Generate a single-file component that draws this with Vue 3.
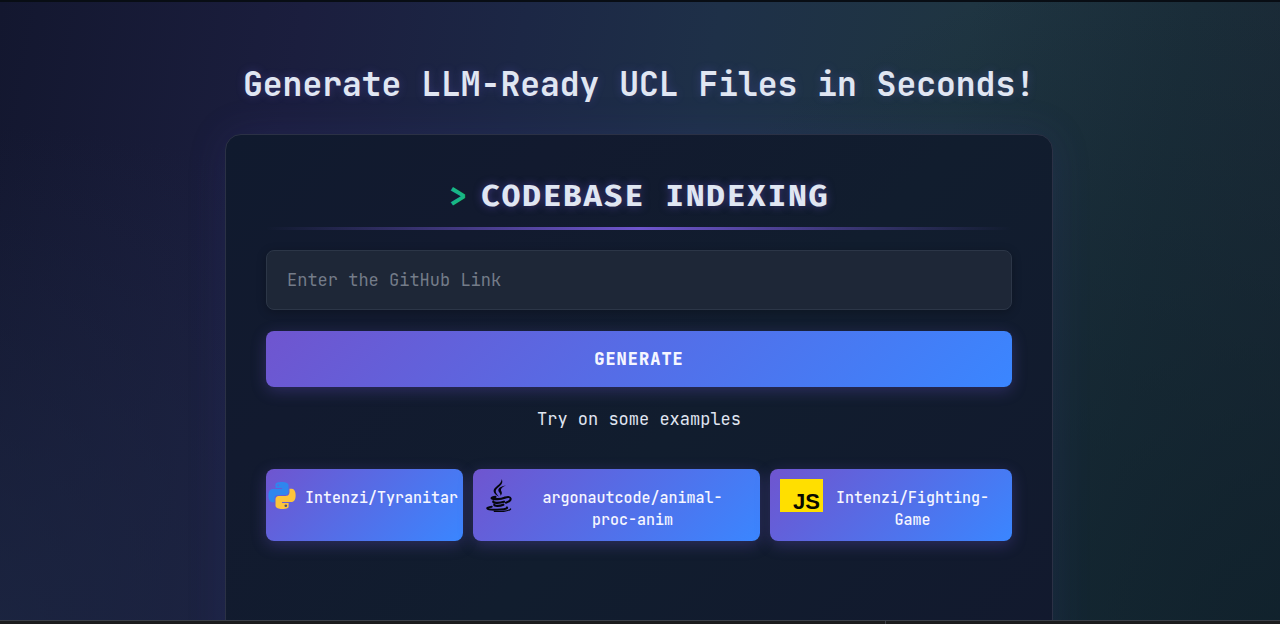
<script setup>
import { ref } from 'vue'

const link = ref('')
const examples = [
  { name: 'Intenzi/Tyranitar', lang: 'python' },
  { name: 'argonautcode/animal-proc-anim', lang: 'java' },
  { name: 'Intenzi/Fighting-Game', lang: 'js' }
]
</script>

<template>
  <div class="page">
    <main class="stage">
      <h1 class="headline">Generate LLM-Ready UCL Files in Seconds!</h1>
      <section class="card">
        <h2 class="title"><span class="prompt">&gt;</span>CODEBASE INDEXING</h2>
        <div class="rule"></div>
        <form class="form" @submit.prevent>
          <input v-model="link" class="field" type="text" aria-label="GitHub link" placeholder="Enter the GitHub Link" />
          <button class="generate" type="submit">GENERATE</button>
        </form>
        <p class="hint">Try on some examples</p>
        <div class="examples">
          <button
            v-for="item in examples"
            :key="item.name"
            type="button"
            class="example"
            :class="item.lang"
            @click="link = 'https://github.com/' + item.name"
          >
            <svg v-if="item.lang === 'python'" class="logo" viewBox="0 0 24 24" aria-hidden="true">
              <path fill="#2f86ee" d="M14.25.18l.9.2.73.26.59.3.45.32.34.34.25.34.16.33.1.3.04.26.02.2-.01.13V8.5l-.05.63-.13.55-.21.46-.26.38-.3.31-.33.25-.35.19-.35.14-.33.1-.3.07-.26.04-.21.02H8.77l-.69.05-.59.14-.5.22-.41.27-.33.32-.27.35-.2.36-.15.37-.1.35-.07.32-.04.27-.02.21v3.06H3.17l-.21-.03-.28-.07-.32-.12-.35-.18-.36-.26-.36-.36-.35-.46-.32-.59-.28-.73-.21-.88-.14-1.05-.05-1.23.06-1.22.16-1.04.24-.87.32-.71.36-.57.4-.44.42-.33.42-.24.4-.16.36-.1.32-.05.24-.01h.16l.06.01h8.16v-.83H6.18l-.01-2.75-.02-.37.05-.34.11-.31.17-.28.25-.26.31-.23.38-.2.44-.18.51-.15.58-.12.64-.1.71-.06.77-.04.84-.02 1.27.05z" />
              <path fill="#fcc43c" d="M21.1 6.11l.28.06.32.12.35.18.36.27.36.35.35.47.32.59.28.73.21.88.14 1.04.05 1.23-.06 1.23-.16 1.04-.24.86-.32.71-.36.57-.4.45-.42.33-.42.24-.4.16-.36.09-.32.05-.24.02-.16-.01h-8.22v.82h5.84l.01 2.76.02.36-.05.34-.11.31-.17.29-.25.25-.31.24-.38.2-.44.17-.51.15-.58.13-.64.09-.71.07-.77.04-.84.01-1.27-.04-1.07-.14-.9-.2-.73-.25-.59-.3-.45-.33-.34-.34-.25-.34-.16-.33-.1-.3-.04-.25-.02-.2.01-.13v-5.34l.05-.64.13-.54.21-.46.26-.38.3-.32.33-.24.35-.2.35-.14.33-.1.3-.06.26-.04.21-.02.13-.01h5.84l.69-.05.59-.14.5-.21.41-.28.33-.32.27-.35.2-.36.15-.36.1-.35.07-.32.04-.28.02-.21V6.07h2.09l.14.01z" />
              <circle cx="8.6" cy="2.9" r="1" fill="#5f66dd" />
              <circle cx="15.4" cy="21.1" r="1.2" fill="#4b5078" />
            </svg>
            <svg v-else-if="item.lang === 'java'" class="logo" viewBox="0 0 78 100" aria-hidden="true">
              <path d="M47 0C54 14 42 21 33 29C25 37 31 44 39 54C20 43 19 34 29 25C38 17 47 11 47 0Z" />
              <path d="M60 20C49 24 44 29 45 34C47 40 51 43 43 51C46 43 36 39 37 33C38 26 49 21 60 20Z" />
              <g fill="none" stroke="#05060c" stroke-linecap="round">
                <path stroke-width="7" d="M28 54C17 55 13 59 22 60C34 62 49 60 56 57" />
                <path stroke-width="7" d="M22 68C19 73 39 74 54 69" />
                <path stroke-width="7" d="M25 78C23 82 40 83 52 78" />
                <path stroke-width="6" d="M59 56C76 50 82 64 60 72" />
                <path stroke-width="6" d="M17 84C-3 87 -1 92 24 93C46 94 68 91 63 86" />
                <path stroke-width="4" d="M25 98C48 100 70 97 74 91" />
              </g>
            </svg>
            <span v-else class="js-logo" aria-hidden="true">JS</span>
            <span class="repo">{{ item.name }}</span>
          </button>
        </div>
      </section>
    </main>
    <footer class="edge"><div></div><div></div></footer>
  </div>
</template>

<style>
body {
  background: #14172f;
}
</style>

<style scoped>
.page {
  box-sizing: border-box;
  display: flex;
  flex-direction: column;
  height: 100vh;
  overflow: hidden;
  border-top: 2px solid #080d14;
  color: #e0e6f2;
  font-family: "JetBrains Mono", "DejaVu Sans Mono", monospace;
  background:
    radial-gradient(ellipse 60% 110% at 100% 100%, rgba(14, 32, 42, 0.8), transparent),
    radial-gradient(ellipse 50% 80% at 0% 100%, rgba(28, 38, 66, 0.8), transparent),
    linear-gradient(100deg, #13172f 0%, #1b1e3e 22%, #1c2745 38%, #1e3048 52%, #1f3542 70%, #1b2e3a 86%, #1c2936 100%);
}
.stage {
  flex: 1;
  min-height: 0;
  overflow: hidden;
  display: flex;
  flex-direction: column;
  align-items: center;
  padding: 60px 2px 0 0;
}
.headline {
  margin: 0 0 28px;
  font-size: 33px;
  line-height: 44px;
  font-weight: 700;
  text-align: center;
  text-shadow: 0 0 10px rgba(110, 100, 230, 0.3);
}
.card {
  box-sizing: border-box;
  flex: 1 0 auto;
  width: 100%;
  max-width: 828px;
  padding: 40px 40px 120px;
  border: 1px solid #2b3145;
  border-radius: 16px;
  background: linear-gradient(135deg, #101a2e, #121a2f 25%, #111d2e 55%, #12192e);
  box-shadow: 0 0 40px rgba(70, 65, 180, 0.14);
}
.title {
  display: flex;
  justify-content: center;
  align-items: center;
  gap: 12px;
  margin: 0;
  font-family: "Fira Code", "Fira Mono", "IBM Plex Mono", "DejaVu Sans Mono", monospace;
  font-size: 30px;
  line-height: 44px;
  letter-spacing: 2px;
  text-shadow: 0 0 8px rgba(110, 90, 220, 0.5);
}
.prompt {
  color: #18b686;
  text-shadow: none;
}
.rule {
  height: 3px;
  margin: 8px 0 20px;
  background: linear-gradient(90deg, transparent, #6f56cd, transparent);
}
.form {
  display: flex;
  flex-direction: column;
  gap: 21px;
}
.field {
  box-sizing: border-box;
  width: 100%;
  height: 60px;
  padding: 0 20px;
  border: 1px solid #2c3647;
  border-radius: 8px;
  background: #1e2737;
  box-shadow: 0 2px 10px rgba(0, 0, 0, 0.25);
  color: inherit;
  font-family: inherit;
  font-size: 17px;
}
.field::placeholder {
  color: #747c89;
  opacity: 1;
}
.generate,
.example {
  border: 0;
  border-radius: 8px;
  background: linear-gradient(135deg, #6f55cf, #3a86ff);
  box-shadow: 0 4px 15px rgba(108, 85, 210, 0.3);
  color: #f5f6ff;
  font-family: inherit;
  cursor: pointer;
}
.generate {
  height: 56px;
  font-size: 17px;
  font-weight: 800;
  letter-spacing: 1px;
}
.hint {
  margin: 20px 0 38px;
  font-size: 17px;
  line-height: 24px;
  text-align: center;
}
.examples {
  display: grid;
  grid-template-columns: minmax(0, 197fr) minmax(0, 287fr) minmax(0, 242fr);
  gap: 10px;
}
.example {
  display: flex;
  align-items: flex-start;
  min-width: 0;
  min-height: 72px;
  padding: 10px;
  font-size: 15px;
  font-weight: 500;
  line-height: 22px;
}
.example.python {
  padding: 10px 4px 10px 2px;
}
.example.java {
  padding: 10px 12px;
}
.logo {
  flex: none;
  width: 28px;
  height: 33px;
  fill: #05060c;
}
.python .logo {
  height: 27px;
  margin-top: 3px;
}
.repo {
  flex: 1;
  min-width: 0;
  padding-top: 8px;
  text-align: center;
}
.python .repo {
  padding-left: 8px;
}
.java .repo {
  padding-left: 16px;
  padding-right: 12px;
}
.js-logo {
  flex: none;
  box-sizing: border-box;
  width: 43px;
  height: 33px;
  padding: 12px 3px 0 0;
  background: #ffdf00;
  color: #080800;
  font-family: "Liberation Sans", sans-serif;
  font-size: 22px;
  line-height: 22px;
  font-weight: 700;
  text-align: right;
}
.edge {
  flex: none;
  display: grid;
  grid-template-columns: 885fr 395fr;
  height: 3px;
  border-top: 1px solid #3c4048;
  background: #1c1c1e;
}
.edge div + div {
  border-left: 1px solid #3c4048;
}
</style>
